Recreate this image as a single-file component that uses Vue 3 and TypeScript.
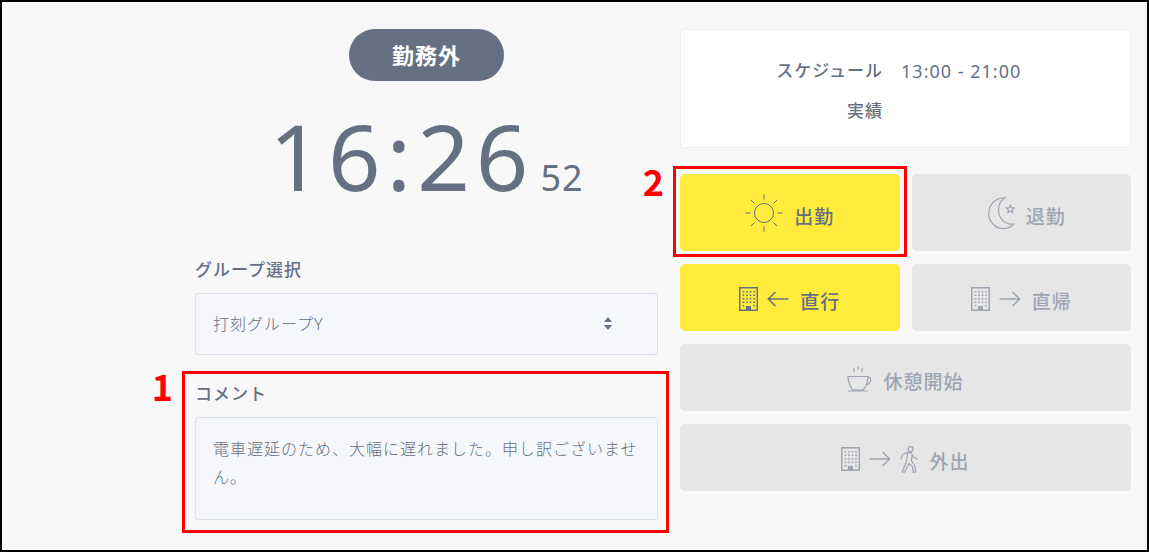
<script setup lang="ts">
import { ref } from 'vue'

const hoursMinutes = ref('16:26')
const seconds = ref('52')
const groups = ['打刻グループY']
const group = ref(groups[0])
const comment = ref('電車遅延のため、大幅に遅れました。申し訳ございません。')
const windows = [0, 1, 2, 3].flatMap((row) => [0, 1, 2, 3].map((col) => ({ x: 3.7 + col * 3.5, y: 4 + row * 3.5 })))
</script>

<template>
  <svg class="defs" aria-hidden="true">
    <symbol id="building" viewBox="0 0 19 24">
      <rect x="0.75" y="0.75" width="17.5" height="22.5" fill="none" stroke="currentColor" stroke-width="1.5" />
      <rect v-for="(w, i) in windows" :key="i" :x="w.x" :y="w.y" width="1.6" height="1.6" fill="currentColor" />
      <path d="M3.7 18h1.6v1.6H3.7zM14.2 18h1.6v1.6h-1.6zM7 19h5v4H7z" fill="currentColor" />
    </symbol>
    <symbol id="arrow" viewBox="0 0 22 16">
      <path d="M0.5 8H21M13.5 1l7.2 7-7.2 7" fill="none" stroke="currentColor" stroke-width="1.5" />
    </symbol>
  </svg>
  <main class="page">
    <section class="column">
      <div class="badge">勤務外</div>
      <div class="clock">
        <span class="time">{{ hoursMinutes }}</span>
        <span class="seconds">{{ seconds }}</span>
      </div>
      <div class="field">
        <label for="group">グループ選択</label>
        <div class="select">
          <select id="group" v-model="group">
            <option v-for="g in groups" :key="g">{{ g }}</option>
          </select>
          <svg class="caret" viewBox="0 0 8 13" aria-hidden="true">
            <path d="M4 0l4 5H0zM0 8h8l-4 5z" fill="currentColor" />
          </svg>
        </div>
      </div>
      <div class="field comment">
        <label for="comment">コメント</label>
        <textarea id="comment" v-model="comment"></textarea>
        <div class="frame frame-comment"><span class="number">1</span></div>
      </div>
    </section>

    <section class="column">
      <dl class="card">
        <dt>スケジュール</dt>
        <dd>13:00 - 21:00</dd>
        <dt>実績</dt>
        <dd></dd>
      </dl>
      <div class="actions">
        <div class="cell">
          <button class="action tall" type="button">
            <svg class="sky" viewBox="0 0 38 38" fill="none" stroke="currentColor" aria-hidden="true">
              <circle cx="19" cy="19" r="9.5" />
              <path d="M19 0.5v5M19 32.5v5M0.5 19h5M32.5 19h5M6 6l3.500 3.500M28.500 28.500l3.500 3.500M6 32l3.500-3.500M28.500 9.500L32 6" />
            </svg>
            <span class="text">出勤</span>
          </button>
          <div class="frame frame-in"><span class="number">2</span></div>
        </div>
        <button class="action tall" type="button" disabled>
          <svg class="sky" viewBox="-11 -3 38 38" fill="none" stroke="currentColor" stroke-width="1.2" aria-hidden="true">
            <path d="M17 .7C7 1 .7 8 .7 16.500C.7 25 7.500 31.700 15.500 31.700C19.500 31.700 23 30 25.500 27C17 28 10.500 21.500 10.500 13C10.500 8 13 3.500 17 .7z" />
            <path d="M22.300 8.200l1.200 2.400 2.700.4-1.900 1.900.4 2.700-2.400-1.300-2.400 1.300.4-2.700-1.900-1.900 2.700-.4z" />
          </svg>
          <span class="text">退勤</span>
        </button>
        <button class="action" type="button">
          <span class="icons">
            <svg class="building" aria-hidden="true"><use href="#building" /></svg>
            <svg class="arrow back" aria-hidden="true"><use href="#arrow" /></svg>
          </span>
          <span class="text">直行</span>
        </button>
        <button class="action" type="button" disabled>
          <span class="icons">
            <svg class="building" aria-hidden="true"><use href="#building" /></svg>
            <svg class="arrow" aria-hidden="true"><use href="#arrow" /></svg>
          </span>
          <span class="text">直帰</span>
        </button>
        <button class="action wide" type="button" disabled>
          <span class="icons">
            <svg class="cup" viewBox="0 0 25 26" fill="none" stroke="currentColor" stroke-width="1.2" aria-hidden="true">
              <path d="M1 10.500h20c-.4 6-2.500 11-5 13.500H6C3.500 21.500 1.400 16.500 1 10.500zM1 25h20M21 11.500c4-1 4 6-2.700 7.800M7 2v4M11.200 0.500v3.500M15 2v4" />
            </svg>
          </span>
          <span class="text">休憩開始</span>
        </button>
        <button class="action wide" type="button" disabled>
          <span class="icons">
            <svg class="building" aria-hidden="true"><use href="#building" /></svg>
            <svg class="arrow" aria-hidden="true"><use href="#arrow" /></svg>
            <svg class="walker" viewBox="0 0 18 27" fill="none" stroke="currentColor" stroke-width="1.2" stroke-linejoin="round" stroke-linecap="round" aria-hidden="true">
              <circle cx="10.500" cy="3.200" r="2.500" />
              <path d="M1 13l1.500-4.500L7 6.700h4.200l2.300 4.500 3.700 1.900M7.500 6.900L6.500 15.500 2.200 25.800l2.300.4L9 17.500l3.500 3.200.7 5.500 2.500-.3-.9-6.400-3.400-4.700.7-5.500" />
            </svg>
          </span>
          <span class="text">外出</span>
        </button>
      </div>
    </section>
  </main>
</template>

<style>
body {
  margin: 0;
  background: #f8f8f8;
}
</style>

<style scoped>
.defs {
  position: absolute;
  width: 0;
  height: 0;
}

.page {
  box-sizing: border-box;
  min-height: 100vh;
  display: grid;
  grid-template-columns: 463fr 451fr;
  column-gap: 22px;
  padding: 27px 16px 16px 193px;
  border: 2px solid #000;
  background: #f8f8f8;
  color: #667083;
  font-family: "Noto Sans", "Noto Sans CJK JP", sans-serif;
  font-size: 17px;
  letter-spacing: 1px;
}

.page :is(button, select, textarea) {
  font-family: inherit;
  letter-spacing: inherit;
  color: inherit;
}

.column {
  display: flex;
  flex-direction: column;
  min-width: 0;
}

.badge {
  align-self: center;
  padding: 0 43px;
  border-radius: 26px;
  background: #667083;
  color: #fff;
  font-size: 22px;
  font-weight: 700;
  line-height: 52px;
}

.clock {
  display: flex;
  justify-content: center;
  align-items: baseline;
  gap: 6px;
  margin: 15px 0 18px;
  line-height: 120px;
}

.time {
  font-size: 92px;
  letter-spacing: 6px;
}

.seconds {
  font-size: 36px;
}

.field {
  position: relative;
  display: flex;
  flex-direction: column;
  gap: 10px;
}

.field + .field {
  margin-top: 25px;
}

label {
  font-weight: 500;
  line-height: 27px;
}

.select {
  position: relative;
}

select,
textarea {
  display: block;
  box-sizing: border-box;
  width: 100%;
  margin: 0;
  border: 1px solid #dde2ec;
  border-radius: 3px;
  background: #f5f7fb;
  font-size: 16px;
  font-weight: 300;
  outline: none;
}

select {
  height: 62px;
  padding: 0 18px 0 17px;
  appearance: none;
}

textarea {
  height: 103px;
  padding: 17px 16px 17px 17px;
  line-height: 28px;
  resize: none;
  overflow: hidden;
}

.caret {
  position: absolute;
  top: 24px;
  right: 46px;
  width: 8px;
  height: 13px;
  pointer-events: none;
}

.card {
  display: grid;
  grid-template-columns: 45% 1fr;
  column-gap: 18px;
  margin: 0 0 26px;
  padding: 21px 0 16px;
  border: 1px solid #eee;
  border-radius: 4px;
  background: #fff;
  line-height: 40px;
}

dt {
  text-align: right;
  font-weight: 500;
}

dd {
  margin: 0;
  font-size: 18px;
}

.actions {
  display: grid;
  grid-template-columns: 1fr 1fr;
  gap: 13px 12px;
}

.cell {
  position: relative;
  display: grid;
}

.action {
  display: flex;
  justify-content: center;
  align-items: center;
  gap: 11px;
  height: 67px;
  padding: 0;
  border: 0;
  border-radius: 5px;
  background: #ffeb3b;
  font-size: 19px;
  font-weight: 500;
}

.tall {
  height: 77px;
}

.wide {
  grid-column: span 2;
}

.action:disabled {
  background: #e6e6e6;
  color: #9fa5b2;
}

.text {
  padding-top: 6px;
}

.icons {
  display: flex;
  align-items: center;
  gap: 9px;
  padding-top: 3px;
}

.sky {
  width: 38px;
  height: 38px;
}

.building {
  width: 19px;
  height: 24px;
}

.arrow {
  width: 22px;
  height: 16px;
}

.back {
  transform: scaleX(-1);
}

.cup {
  width: 25px;
  height: 26px;
}

.walker {
  width: 18px;
  height: 27px;
}

.frame {
  position: absolute;
  border: 3px solid #f00;
  pointer-events: none;
}

.frame-comment {
  inset: -9px -11px -13px -13px;
}

.frame-in {
  inset: -8px -7px -6px;
}

.number {
  position: absolute;
  top: -7px;
  right: 100%;
  margin-right: 12px;
  color: #f00;
  font-family: "Noto Sans CJK JP", sans-serif;
  font-size: 36px;
  font-weight: 700;
  line-height: 36px;
  letter-spacing: 0;
}
</style>
